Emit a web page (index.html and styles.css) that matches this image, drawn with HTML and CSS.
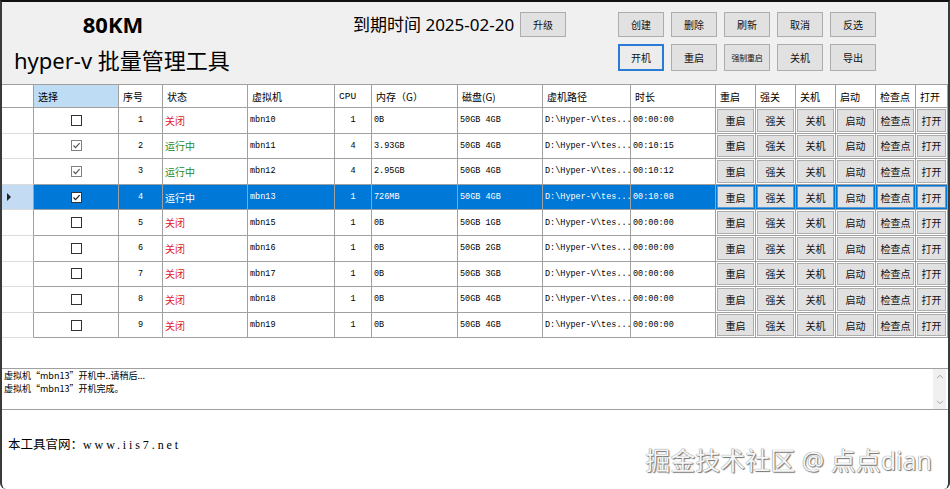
FILE: index.html
```html
<!DOCTYPE html>
<html lang="zh-CN">
<head>
<meta charset="utf-8">
<title>hyper-v 批量管理工具</title>
<link rel="stylesheet" href="styles.css">
</head>
<body>
<div class="window">
  <div class="top">
    <div class="brand">
      <div class="brand-name">80KM</div>
      <div class="brand-title">hyper-v 批量管理工具</div>
    </div>
    <div class="expiry">
      <span class="expiry-text">到期时间 2025-02-20</span>
      <span class="btn">升级</span>
    </div>
    <div class="actions">
      <span class="btn">创建</span>
      <span class="btn">删除</span>
      <span class="btn">刷新</span>
      <span class="btn">取消</span>
      <span class="btn">反选</span>
      <span class="btn focus">开机</span>
      <span class="btn">重启</span>
      <span class="btn small">强制重启</span>
      <span class="btn">关机</span>
      <span class="btn">导出</span>
    </div>
  </div>

  <div class="grid">
    <div class="row head">
      <div class="c rh"></div>
      <div class="c h hsel">选择</div>
      <div class="c h">序号</div>
      <div class="c h">状态</div>
      <div class="c h">虚拟机</div>
      <div class="c h mono">CPU</div>
      <div class="c h">内存（G）</div>
      <div class="c h">磁盘(G)</div>
      <div class="c h">虚机路径</div>
      <div class="c h">时长</div>
      <div class="c h">重启</div>
      <div class="c h">强关</div>
      <div class="c h">关机</div>
      <div class="c h">启动</div>
      <div class="c h">检查点</div>
      <div class="c h">打开</div>
    </div>

    <div class="row">
      <div class="c rh"></div>
      <div class="c ck"><span class="cb"></span></div>
      <div class="c num mono">1</div>
      <div class="c st off">关闭</div>
      <div class="c mono">mbn10</div>
      <div class="c num mono">1</div>
      <div class="c mono">0B</div>
      <div class="c mono">50GB 4GB</div>
      <div class="c mono">D:\Hyper-V\tes...</div>
      <div class="c mono">00:00:00</div>
      <div class="c bc"><span class="gb">重启</span></div>
      <div class="c bc"><span class="gb">强关</span></div>
      <div class="c bc"><span class="gb">关机</span></div>
      <div class="c bc"><span class="gb">启动</span></div>
      <div class="c bc"><span class="gb">检查点</span></div>
      <div class="c bc"><span class="gb">打开</span></div>
    </div>

    <div class="row">
      <div class="c rh"></div>
      <div class="c ck"><span class="cb on"><svg viewBox="0 0 9 9"><path d="M1.5 4.5 L3.6 6.6 L7.6 2.2"/></svg></span></div>
      <div class="c num mono">2</div>
      <div class="c st run">运行中</div>
      <div class="c mono">mbn11</div>
      <div class="c num mono">4</div>
      <div class="c mono">3.93GB</div>
      <div class="c mono">50GB 4GB</div>
      <div class="c mono">D:\Hyper-V\tes...</div>
      <div class="c mono">00:10:15</div>
      <div class="c bc"><span class="gb">重启</span></div>
      <div class="c bc"><span class="gb">强关</span></div>
      <div class="c bc"><span class="gb">关机</span></div>
      <div class="c bc"><span class="gb">启动</span></div>
      <div class="c bc"><span class="gb">检查点</span></div>
      <div class="c bc"><span class="gb">打开</span></div>
    </div>

    <div class="row">
      <div class="c rh"></div>
      <div class="c ck"><span class="cb on"><svg viewBox="0 0 9 9"><path d="M1.5 4.5 L3.6 6.6 L7.6 2.2"/></svg></span></div>
      <div class="c num mono">3</div>
      <div class="c st run">运行中</div>
      <div class="c mono">mbn12</div>
      <div class="c num mono">4</div>
      <div class="c mono">2.95GB</div>
      <div class="c mono">50GB 4GB</div>
      <div class="c mono">D:\Hyper-V\tes...</div>
      <div class="c mono">00:10:12</div>
      <div class="c bc"><span class="gb">重启</span></div>
      <div class="c bc"><span class="gb">强关</span></div>
      <div class="c bc"><span class="gb">关机</span></div>
      <div class="c bc"><span class="gb">启动</span></div>
      <div class="c bc"><span class="gb">检查点</span></div>
      <div class="c bc"><span class="gb">打开</span></div>
    </div>

    <div class="row sel">
      <div class="c rh"><span class="tri"></span></div>
      <div class="c ck"><span class="cb on"><svg viewBox="0 0 9 9"><path d="M1.5 4.5 L3.6 6.6 L7.6 2.2"/></svg></span></div>
      <div class="c num mono">4</div>
      <div class="c st run">运行中</div>
      <div class="c mono">mbn13</div>
      <div class="c num mono">1</div>
      <div class="c mono">726MB</div>
      <div class="c mono">50GB 4GB</div>
      <div class="c mono">D:\Hyper-V\tes...</div>
      <div class="c mono">00:10:08</div>
      <div class="c bc"><span class="gb">重启</span></div>
      <div class="c bc"><span class="gb">强关</span></div>
      <div class="c bc"><span class="gb">关机</span></div>
      <div class="c bc"><span class="gb">启动</span></div>
      <div class="c bc"><span class="gb">检查点</span></div>
      <div class="c bc"><span class="gb">打开</span></div>
    </div>

    <div class="row">
      <div class="c rh"></div>
      <div class="c ck"><span class="cb"></span></div>
      <div class="c num mono">5</div>
      <div class="c st off">关闭</div>
      <div class="c mono">mbn15</div>
      <div class="c num mono">1</div>
      <div class="c mono">0B</div>
      <div class="c mono">50GB 1GB</div>
      <div class="c mono">D:\Hyper-V\tes...</div>
      <div class="c mono">00:00:00</div>
      <div class="c bc"><span class="gb">重启</span></div>
      <div class="c bc"><span class="gb">强关</span></div>
      <div class="c bc"><span class="gb">关机</span></div>
      <div class="c bc"><span class="gb">启动</span></div>
      <div class="c bc"><span class="gb">检查点</span></div>
      <div class="c bc"><span class="gb">打开</span></div>
    </div>

    <div class="row">
      <div class="c rh"></div>
      <div class="c ck"><span class="cb"></span></div>
      <div class="c num mono">6</div>
      <div class="c st off">关闭</div>
      <div class="c mono">mbn16</div>
      <div class="c num mono">1</div>
      <div class="c mono">0B</div>
      <div class="c mono">50GB 2GB</div>
      <div class="c mono">D:\Hyper-V\tes...</div>
      <div class="c mono">00:00:00</div>
      <div class="c bc"><span class="gb">重启</span></div>
      <div class="c bc"><span class="gb">强关</span></div>
      <div class="c bc"><span class="gb">关机</span></div>
      <div class="c bc"><span class="gb">启动</span></div>
      <div class="c bc"><span class="gb">检查点</span></div>
      <div class="c bc"><span class="gb">打开</span></div>
    </div>

    <div class="row">
      <div class="c rh"></div>
      <div class="c ck"><span class="cb"></span></div>
      <div class="c num mono">7</div>
      <div class="c st off">关闭</div>
      <div class="c mono">mbn17</div>
      <div class="c num mono">1</div>
      <div class="c mono">0B</div>
      <div class="c mono">50GB 3GB</div>
      <div class="c mono">D:\Hyper-V\tes...</div>
      <div class="c mono">00:00:00</div>
      <div class="c bc"><span class="gb">重启</span></div>
      <div class="c bc"><span class="gb">强关</span></div>
      <div class="c bc"><span class="gb">关机</span></div>
      <div class="c bc"><span class="gb">启动</span></div>
      <div class="c bc"><span class="gb">检查点</span></div>
      <div class="c bc"><span class="gb">打开</span></div>
    </div>

    <div class="row">
      <div class="c rh"></div>
      <div class="c ck"><span class="cb"></span></div>
      <div class="c num mono">8</div>
      <div class="c st off">关闭</div>
      <div class="c mono">mbn18</div>
      <div class="c num mono">1</div>
      <div class="c mono">0B</div>
      <div class="c mono">50GB 4GB</div>
      <div class="c mono">D:\Hyper-V\tes...</div>
      <div class="c mono">00:00:00</div>
      <div class="c bc"><span class="gb">重启</span></div>
      <div class="c bc"><span class="gb">强关</span></div>
      <div class="c bc"><span class="gb">关机</span></div>
      <div class="c bc"><span class="gb">启动</span></div>
      <div class="c bc"><span class="gb">检查点</span></div>
      <div class="c bc"><span class="gb">打开</span></div>
    </div>

    <div class="row">
      <div class="c rh"></div>
      <div class="c ck"><span class="cb"></span></div>
      <div class="c num mono">9</div>
      <div class="c st off">关闭</div>
      <div class="c mono">mbn19</div>
      <div class="c num mono">1</div>
      <div class="c mono">0B</div>
      <div class="c mono">50GB 4GB</div>
      <div class="c mono">D:\Hyper-V\tes...</div>
      <div class="c mono">00:00:00</div>
      <div class="c bc"><span class="gb">重启</span></div>
      <div class="c bc"><span class="gb">强关</span></div>
      <div class="c bc"><span class="gb">关机</span></div>
      <div class="c bc"><span class="gb">启动</span></div>
      <div class="c bc"><span class="gb">检查点</span></div>
      <div class="c bc"><span class="gb">打开</span></div>
    </div>
  </div>

  <div class="log">
    <div class="log-text">
      <div class="log-line">虚拟机“mbn13”开机中..请稍后...</div>
      <div class="log-line">虚拟机“mbn13”开机完成。</div>
    </div>
    <div class="sb">
      <svg viewBox="0 0 9 6" class="arr"><path d="M1 5 L4.5 1.5 L8 5"/></svg>
      <svg viewBox="0 0 9 6" class="arr"><path d="M1 1 L4.5 4.5 L8 1"/></svg>
    </div>
  </div>

  <div class="footer">
    <span class="site-label">本工具官网：</span><span class="site-url">www.iis7.net</span>
  </div>

  <div class="watermark">掘金技术社区 @ 点点dian</div>
</div>
</body>
</html>
```

FILE: styles.css
```css
* { box-sizing: border-box; }

body {
  margin: 0;
  background: #ffffff;
  font-family: "Noto Sans CJK SC", "Noto Sans", sans-serif;
  color: #000;
}

.window {
  position: relative;
  width: 950px;
  height: 489px;
  border-top: 2px solid #111;
  border-left: 2px solid #3a3a3a;
  border-right: 2px solid #3a3a3a;
  border-bottom-left-radius: 6px;
  border-bottom-right-radius: 6px;
  display: flex;
  flex-direction: column;
  overflow: hidden;
  background: #fff;
}

/* ---------- top toolbar ---------- */
.top {
  height: 82px;
  flex: none;
  background: #f0f0f0;
  display: flex;
  padding: 10px 0 0 12px;
}

.brand { width: 339px; flex: none; }

.brand-name {
  width: 198px;
  text-align: center;
  font-family: "Noto Sans", sans-serif;
  font-weight: bold;
  font-size: 22px;
  line-height: 24px;
}

.brand-title {
  margin-top: 10px;
  font-family: "Noto Sans", "Noto Sans CJK SC", sans-serif;
  font-size: 22px;
  line-height: 28px;
  white-space: nowrap;
}

.expiry {
  width: 213px;
  height: 25px;
  flex: none;
  display: flex;
  align-items: center;
  justify-content: space-between;
}

.expiry-text {
  font-family: "Noto Sans", "Noto Sans CJK SC", sans-serif;
  font-size: 17px;
  line-height: 25px;
  white-space: nowrap;
}

.btn {
  width: 46px;
  height: 25px;
  display: flex;
  align-items: center;
  justify-content: center;
  background: #e1e1e1;
  border: 1px solid #adadad;
  font-size: 10px;
  color: #111;
  white-space: nowrap;
}

.btn.small { font-size: 8px; letter-spacing: -0.3px; }

.btn.focus {
  border: 2px solid #2b7bd6;
  background: #ececec;
}

.actions {
  margin-left: 52px;
  display: grid;
  grid-template-columns: repeat(5, 46px);
  grid-template-rows: 25px 27px;
  column-gap: 7px;
  row-gap: 7px;
  align-content: start;
}

.actions .btn { width: 46px; height: 100%; }

/* ---------- data grid ---------- */
.grid {
  height: 284px;
  flex: none;
  border-top: 1px solid #a0a0a0;
  background: #fff;
  display: grid;
  grid-template-columns: 32px 85px 44px 85px 87px 37px 86px 85px 88px 85px 40px 40px 40px 40px 40px 32px;
  grid-template-rows: 23px repeat(9, 25.6px);
  align-content: start;
}

.row { display: contents; }

.c {
  border-right: 1px solid #a0a0a0;
  border-bottom: 1px solid #a0a0a0;
  display: flex;
  align-items: center;
  padding-left: 2px;
  white-space: nowrap;
  overflow: hidden;
  font-size: 10px;
  background: #fff;
}

.c.h { padding-left: 4px; font-size: 10px; }
.c.h.mono { font-size: 9.5px; }
.c.hsel { background: #bfdcf5; }

.c.rh { border-bottom-color: #dcdcdc; padding-left: 5px; }
.head .c.rh { border-bottom-color: #a0a0a0; }

.mono {
  font-family: "Liberation Mono", "Noto Sans CJK SC", monospace;
  font-size: 8.5px;
}

.c.num { justify-content: center; padding-left: 0; }
.c.ck { justify-content: center; padding-left: 0; }

.st.off { color: #e0202e; }
.st.run { color: #1d8a2a; }

.cb {
  width: 11px;
  height: 11px;
  border: 1px solid #333;
  background: #fff;
  display: flex;
  align-items: center;
  justify-content: center;
}

.cb.on { border-color: #808080; }
.cb svg { width: 9px; height: 9px; }
.cb svg path { fill: none; stroke: #555; stroke-width: 1.2; }

.c.bc { padding: 1px; }

.gb {
  flex: 1;
  height: 100%;
  display: flex;
  align-items: center;
  justify-content: center;
  background: #e1e1e1;
  border: 1px solid #adadad;
  font-size: 10px;
  color: #111;
}

/* selected row */
.sel .c { background: #0078d7; color: #fff; }
.sel .c.rh { background: #c3dcf3; }
.sel .st.run { color: #fff; }
.sel .cb { border-color: #333; }
.sel .cb svg path { stroke: #222; }
.sel .gb { border-color: #5d9ad6; color: #111; }

.tri {
  width: 0;
  height: 0;
  border-left: 4px solid #222;
  border-top: 4px solid transparent;
  border-bottom: 4px solid transparent;
}

/* ---------- log ---------- */
.log {
  height: 42px;
  flex: none;
  border-top: 1px solid #a0a0a0;
  border-bottom: 1px solid #a0a0a0;
  display: flex;
}

.log-text {
  flex: 1;
  padding: 0 0 0 2px;
  font-size: 9px;
  line-height: 13.2px;
}

.log-line { height: 13.2px; white-space: nowrap; }

.sb {
  width: 13px;
  margin-right: 2px;
  background: #f0f0f0;
  display: flex;
  flex-direction: column;
  justify-content: space-between;
  align-items: center;
  padding: 5px 0 4px;
}

.arr { width: 8px; height: 5px; }
.arr path { fill: none; stroke: #a0a0a0; stroke-width: 1.2; }

/* ---------- footer ---------- */
.footer {
  flex: 1;
  padding: 26px 0 0 6px;
  font-size: 12.5px;
  line-height: 16px;
  white-space: nowrap;
}

.site-url {
  font-family: "Liberation Serif", serif;
  font-size: 12px;
  letter-spacing: 2.9px;
}

.watermark {
  position: absolute;
  right: 16px;
  bottom: 14px;
  font-family: "Noto Sans", "Noto Sans CJK SC", sans-serif;
  font-size: 25px;
  line-height: 30px;
  color: #f6f6f6;
  text-shadow: 0 0 1px #555, 1px 1px 1px #777;
  white-space: nowrap;
}
```
